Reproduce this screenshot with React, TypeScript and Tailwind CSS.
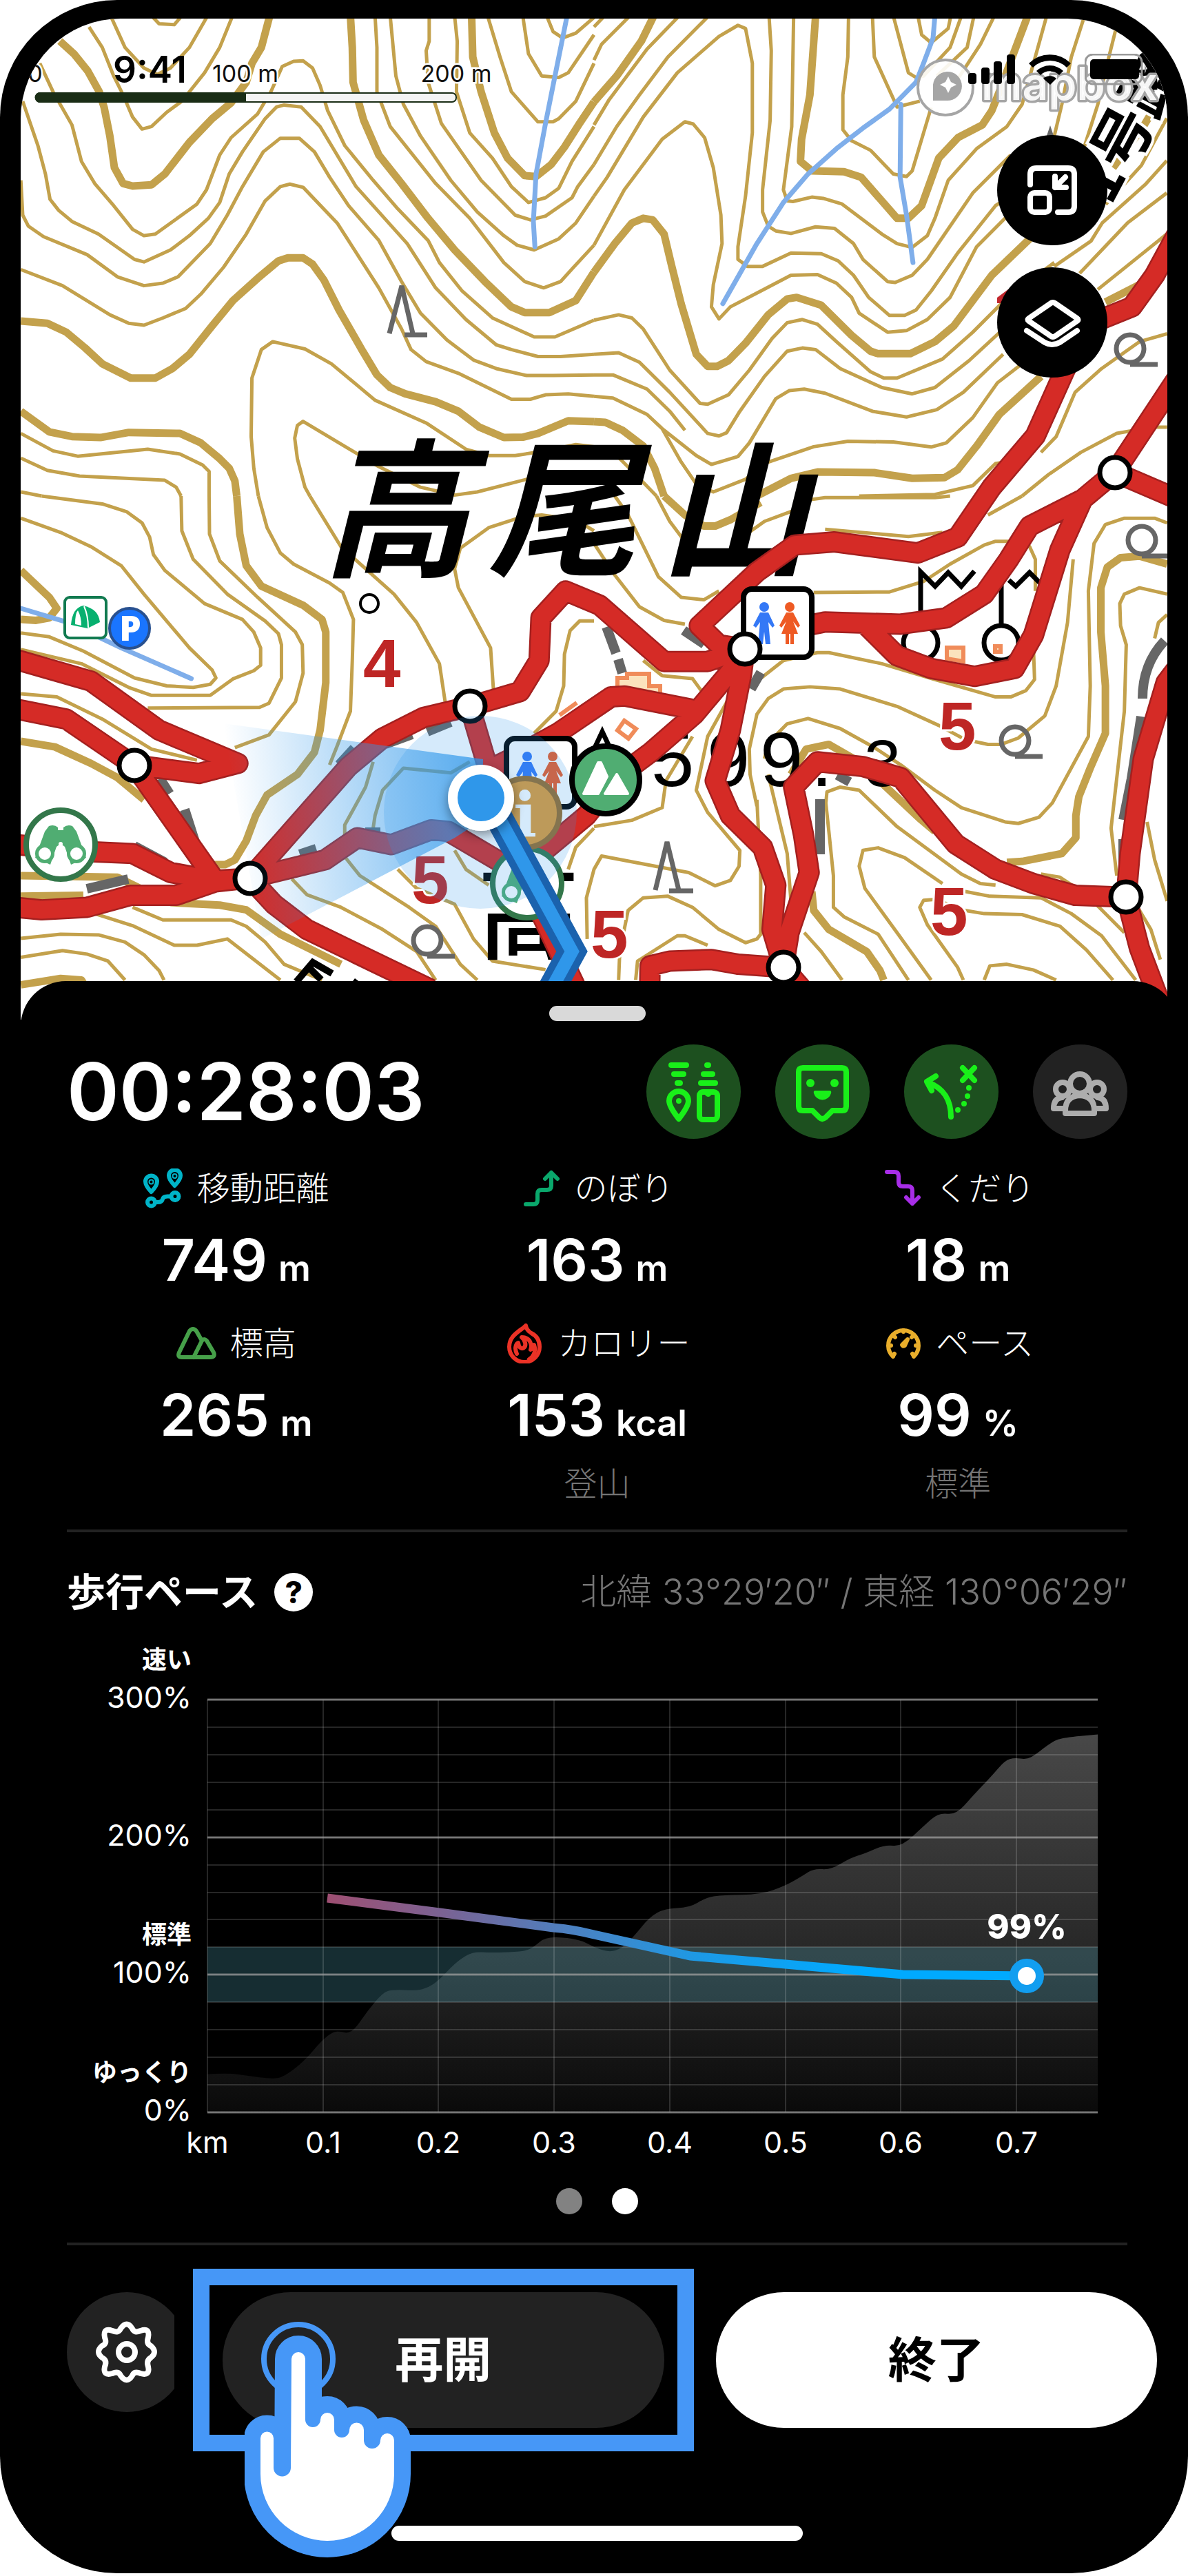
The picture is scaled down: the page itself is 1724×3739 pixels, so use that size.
import type { ReactNode } from "react";

type Point = [number, number];

// Contour lines are kept per map tile, every tile is 1568 x 1568 units.
const TILE = 1568;

const tiles = [
  {
    x: 0,
    y: 0,
    bold: "M158,130 195,170 232,225 262,290 275,340 290,430 302,530 325,580 350,588 400,584 435,550 500,450 560,375 610,325 650,260 665,200 690,150 712,50 M925,50 930,150 932,260 960,380 1000,490 1060,580 1130,690 1200,790 1280,890 1350,970 1385,988 1450,988 1520,950 1568,860 M1245,50 1248,180 1270,290 1305,420 1340,500 1385,555 1415,558 1455,520 1490,465 1530,390 1568,322 M55,1015 125,1022 175,1050 225,1100 270,1150 345,1195 410,1195 455,1165 500,1120 560,1030 615,950 680,880 735,825 760,815 800,815 825,835 855,885 895,980 955,1105 995,1185 1030,1225 1070,1245 1150,1270 1210,1300 1265,1350 1330,1383 1380,1382 1420,1370 1500,1330 1568,1333 M55,1300 130,1365 190,1380 265,1383 340,1367 475,1370 530,1400 580,1450 605,1480 620,1520 625,1568",
    thin: "M400,50 420,75 460,78 480,50 M292,50 330,150 380,215 415,235 450,215 500,150 548,50 M235,85 270,150 300,240 325,300 350,370 375,408 400,400 440,355 480,320 540,230 580,150 614,50 M105,200 140,290 190,395 215,510 250,580 300,650 350,725 380,745 410,740 520,645 545,600 580,490 610,435 680,360 715,290 745,210 775,194 800,192 825,215 845,270 865,350 910,460 985,570 1050,660 1130,760 1160,830 1220,920 1300,1005 1410,1065 1465,1065 1568,1012 M60,320 100,460 120,550 132,630 155,665 190,700 260,740 355,820 380,828 450,790 500,745 550,690 580,640 605,550 640,480 700,375 730,338 750,332 795,338 845,400 900,510 940,590 1000,670 1075,770 1150,910 1230,1010 1310,1090 1350,1105 1420,1127 1480,1127 1568,1120 M55,570 60,680 75,715 115,748 230,805 310,875 380,903 430,895 470,875 555,770 600,680 640,590 695,480 740,437 790,437 830,480 870,560 920,650 1000,760 1060,890 1110,990 1180,1075 1250,1138 1310,1165 1390,1187 1460,1187 1568,1185 M55,852 165,903 290,995 340,1022 380,1028 430,1005 490,975 530,930 590,845 650,740 700,635 740,590 765,582 800,592 890,705 1000,910 1060,1040 1085,1105 1125,1143 1210,1180 1350,1262 1400,1262 1440,1248 1500,1245 1568,1253 M990,50 995,150 995,290 1030,400 1150,580 1240,690 1330,830 1385,890 1435,910 1480,890 1510,850 1568,775 M1030,50 1045,240 1065,330 1110,430 1190,570 1260,670 1330,745 1365,775 1410,790 1475,755 1520,705 1568,620 M1133,50 1133,130 1125,160 1130,260 1165,390 1270,570 1360,680 1400,695 1440,683 1510,625 1525,590 1568,520 M1200,50 1207,130 1205,290 1240,420 1300,500 1350,590 1395,640 1440,625 1475,595 1510,510 1568,400 M1287,50 1320,180 1350,290 1420,385 1460,385 1475,375 1520,320 1568,200 M1380,50 1395,170 1430,240 1475,245 1500,230 1568,110 M1443,50 1460,100 1485,120 1520,105 1568,55 M682,1568 670,1480 663,1380 665,1195 690,1105 720,1080 805,1103 875,1150 990,1265 1125,1337 1230,1420 1290,1440 1360,1440 1440,1425 1520,1405 1568,1412 M818,1568 805,1540 785,1450 778,1385 785,1345 800,1332 860,1375 1000,1475 1110,1540 1200,1565 1260,1555 1400,1512 M55,1370 140,1425 205,1442 390,1420 475,1435 535,1470 552,1490 552,1568 M55,1448 125,1487 210,1505 435,1518 465,1540 478,1568 M55,1555 110,1568",
    river: "M1497,50 1465,240 1440,390 1415,550 1408,700 1412,780",
  },
  {
    x: 1,
    y: 0,
    bold: "M158,50 125,130 60,240 0,322 M585,50 570,300 548,440 545,510 575,540 660,543 705,560 800,690 830,690 865,650 910,500 961,435 1025,395 1050,350 1070,290 1106,174 1145,50 M0,860 55,770 100,705 130,690 155,695 185,740 205,840 230,960 270,1120 300,1158 325,1158 355,1140 400,1085 460,995 510,945 535,940 600,965 680,1060 730,1110 750,1118 835,1118 900,1080 950,1030 1050,870 1150,755 M0,1333 30,1335 75,1360 130,1410 160,1480 185,1568 M430,1568 520,1512 590,1492 740,1494 840,1512 925,1510 960,1485 1010,1410 1070,1310 1180,1190 M1350,955 1440,900 1475,870 M1480,340 1450,400 1370,530",
    thin: "M28,50 0,85 M95,50 20,140 0,190 M225,50 140,155 40,315 0,395 M303,50 195,180 120,300 60,400 40,440 0,520 M0,620 35,560 130,370 220,230 330,115 380,80 400,90 418,200 418,420 400,620 380,780 380,820 405,842 445,842 520,800 600,802 645,825 685,870 725,940 780,997 820,997 850,980 890,920 960,800 1060,650 1100,620 M0,775 80,600 180,440 240,385 262,392 292,435 315,530 335,680 338,770 315,900 310,970 330,1008 360,970 440,920 520,870 590,868 640,895 680,940 700,990 775,1050 825,1045 880,1010 940,940 1010,780 1110,660 M462,50 468,160 465,380 445,600 445,670 460,715 480,730 520,738 585,717 635,722 685,770 710,820 775,890 795,893 840,870 880,820 1000,610 1100,490 M527,50 522,400 500,600 510,635 525,637 575,623 605,627 655,645 760,740 800,770 840,782 880,745 900,690 935,570 1010,470 1090,400 1130,330 1195,50 M672,50 670,180 657,300 657,410 680,445 730,475 790,550 825,558 840,540 890,340 M735,50 740,180 800,338 860,320 M790,50 830,230 850,245 870,240 940,150 970,50 M855,50 865,110 890,135 935,90 942,50 M905,240 985,150 1003,50 M960,250 1020,140 1057,50 M1295,50 1260,180 1235,330 1215,430 M1378,90 1355,200 1330,330 1290,480 M1512,374 1445,523 1351,646 M1512,508 1457,581 1342,704 1312,762 1215,842 M1512,610 1409,704 1282,864 M1512,740 1330,915 M0,1012 65,995 100,1005 130,1040 200,1170 280,1275 300,1278 355,1248 410,1170 470,1070 510,1020 550,1010 590,1025 640,1080 730,1175 765,1195 800,1195 920,1135 1000,1050 1100,930 1215,830 M0,1120 65,1115 120,1145 200,1240 300,1370 330,1378 350,1368 385,1300 450,1190 510,1110 550,1100 585,1105 650,1165 760,1225 840,1245 900,1225 990,1140 1085,1035 M0,1185 50,1185 140,1230 200,1300 240,1360 M0,1253 50,1258 140,1310 180,1355 270,1440 310,1468 380,1443 410,1400 480,1260 515,1235 555,1230 610,1243 735,1300 825,1318 905,1295 975,1240 1080,1120 M180,1355 230,1460 270,1530 315,1555 400,1515 450,1465 580,1412 670,1395 790,1397 890,1413 930,1400 1000,1320 1065,1210 1130,1150 M0,1412 60,1440 110,1500 165,1568 M700,1568 900,1563 1000,1535 1060,1465 1090,1460 M1513,1350 1475,1350 1380,1370 1285,1430 1200,1500 1130,1568 M1513,1055 1440,1080 1340,1165 1270,1240 1220,1380 1180,1430",
    river: "M900,50 895,120 870,200 850,260 780,345 710,405 640,470 565,550 500,640 430,770 340,960 M810,330 808,560 825,680 842,830",
  },
  {
    x: 0,
    y: 1,
    bold: "M625,0 633,120 650,220 690,285 800,345 850,390 860,430 860,590 845,740 830,810 785,880 705,945 675,1010 650,1090 620,1150 595,1165 555,1165 M55,235 130,320 150,355 130,385 95,393 55,390 M55,775 145,793 240,845 310,890 380,960 M55,1200 310,1205 370,1240 M55,1265 220,1262 M450,1285 580,1293 650,1308 740,1385 900,1480 M55,1545 160,1525 215,1530 235,1568",
    thin: "M110,0 270,25 335,50 375,85 395,130 405,185 435,235 540,340 640,390 670,430 688,480 688,535 670,552 615,578 555,630 400,630 340,605 215,530 55,485 M55,70 160,115 240,160 320,220 380,310 500,480 560,550 570,575 555,595 510,605 440,600 355,575 220,490 130,445 55,433 M478,0 480,110 510,200 600,310 700,395 735,435 743,470 743,575 710,655 685,668 390,670 M552,0 553,120 580,205 680,320 780,430 798,470 800,560 780,650 710,755 620,795 M682,0 705,100 740,180 775,215 870,275 905,305 933,390 930,520 925,680 890,790 870,850 M818,0 900,160 1040,310 1100,400 1160,530 1175,650 M55,625 150,635 270,705 400,800 520,835 M1568,110 1520,75 1430,60 1380,65 1290,100 1215,165 1200,230 1210,290 1295,480 1303,620 M1568,395 1530,395 1505,425 1490,500 1488,600 1468,680 1410,750 M1240,840 1190,875 1065,860 1010,930 990,1010 985,1050 M985,840 965,920 910,1040 910,1140 950,1200 1080,1300 1150,1360 1215,1480 1260,1530 M770,1210 810,1260 900,1300 1010,1370 1100,1440 1150,1530 M1200,1120 1230,1180 1290,1230 M1050,1180 1100,1240 1200,1290 1250,1400 1300,1470 1440,1497 M55,1398 160,1385 260,1387 330,1410 380,1450 420,1500 433,1530 M55,1458 165,1437 230,1448 285,1470 330,1530 M250,1320 350,1358 460,1420 520,1420 600,1400 740,1530 M350,1300 430,1340 610,1340 650,1360 700,1410 750,1480 850,1530 M1568,1050 1520,1110 1500,1180",
    river: "M55,355 180,400 320,480 505,577",
  },
  {
    x: 1,
    y: 1,
    bold: "M185,0 240,60 290,95 320,95 360,75 440,20 M1513,215 1440,190 1390,195 1355,225 1338,290 1338,430 1350,600 1350,750 1310,860 1280,950 1272,1010 1272,1080 1235,1130 1130,1155 1090,1158 M520,880 560,800 620,785 700,840 860,1020 900,1060 M575,1250 580,1310 620,1370 720,1440 755,1500 765,1530",
    thin: "M55,0 90,60 170,255 230,320 290,328 330,300 M0,150 55,250 120,350 185,393 240,405 M550,15 610,5 900,5 940,0 M380,140 450,80 540,40 M610,105 830,128 920,115 M1040,60 1130,0 M165,0 200,80 250,160 M580,305 780,303 870,270 940,215 1030,155 1060,143 1110,143 1150,160 1165,200 1165,300 M415,600 500,520 590,495 620,495 760,530 900,580 1060,635 1100,635 1140,615 1163,580 1160,480 M130,520 180,568 260,577 280,610 300,640 M430,980 412,880 410,800 430,690 460,640 500,610 570,603 650,610 800,665 910,725 980,770 1040,785 1075,785 1120,765 1190,695 1220,600 1250,400 1265,200 M450,830 460,780 510,720 565,703 650,735 740,795 810,850 900,930 970,985 1085,1030 1120,1035 1175,1015 1210,970 1305,760 1310,600 1305,300 1320,150 1350,90 1400,70 1480,70 1513,85 M1513,310 1440,290 1400,310 1388,340 1390,410 1405,470 1400,680 1365,1050 1380,1200 M1513,375 1490,400 1480,450 M365,620 300,760 270,930 300,1000 385,1120 383,1170 360,1215 320,1232 250,1190 20,1138 0,1180 -20,1270 -18,1400 M0,1045 100,1025 180,985 190,900 260,760 M440,1385 430,1400 400,1412 330,1370 260,1300 195,1265 130,1270 90,1310 68,1440 65,1530 M430,960 440,1200 440,1390 M460,880 510,1130 520,1280 M110,1530 115,1470 220,1390 240,1390 300,1420 M1060,1230 1020,1225 970,1195 800,1045 700,930 650,920 615,935 612,970 620,1060 632,1200 632,1300 660,1330 750,1385 830,1530 M920,1225 820,1143 750,1112 710,1120 700,1170 715,1240 800,1380 890,1530 M975,1530 960,1490 880,1355 860,1300 870,1278 900,1275 980,1310 1030,1320 1130,1323 1230,1360 1300,1435 1370,1530 M980,1250 1045,1265 1180,1270 1260,1320 1340,1390 1430,1530 M1180,1195 1230,1205 1300,1260 1400,1380 M1460,1030 1480,1150 1513,1280 M1430,1290 1470,1370 1495,1465 M1030,1530 1045,1485 1090,1480 1160,1498 1220,1530 M555,1380 600,1440 655,1530",
    river: "",
  },
];

// Trails use the coordinates of the lower right tile.
const trails =
  "M-1560,505 -1328,585 -1148,740 -940,845 -1043,877 -1213,850 M-1560,665 -1393,705 -1213,852 -1000,1215 M-1560,1098 -1318,1125 -1218,1130 -1118,1190 -1003,1215 -908,1208 M-1560,1296 -1458,1308 -1338,1300 -1223,1262 -1103,1262 -1000,1220 -908,1208 M-908,1208 -648,855 -558,765 -450,700 -328,665 -195,618 -145,520 -140,385 -75,300 15,345 185,523 300,523 398,483 M-908,1208 -710,1150 -625,1080 -535,1102 -430,1055 -385,1060 -250,1155 -180,1170 -20,1010 60,890 150,810 265,690 300,640 398,500 M263,675 81,632 45,635 -94,748 -215,828 -288,871 M-328,665 -275,880 M-908,1208 -845,1290 -758,1370 -430,1560 M-148,1300 -45,1560 M398,483 390,560 360,740 320,900 360,1010 445,1110 480,1230 470,1370 500,1490 565,1580 M500,1490 515,1380 568,1190 553,1070 527,920 590,840 710,855 810,890 955,1100 1060,1180 1160,1225 1270,1262 1405,1268 M500,1490 380,1480 310,1465 200,1470 148,1485 147,1560 M1580,480 1510,590 1450,830 1415,1130 1405,1268 1440,1430 1500,1620 M398,483 330,470 278,410 430,240 530,155 635,145 855,180 960,130 1050,-28 1165,-190 1240,-390 1300,-540 1420,-598 1480,-698 1540,-830 M480,430 610,398 810,405 930,385 1030,310 1095,200 1150,95 1290,10 1375,-75 1560,20 M1375,-75 1560,-410 M1290,10 1230,170 1160,440 1110,545 1005,570 890,545 800,505 720,410";

const junctions: Point[] = [
  [682, 1025],
  [195, 1111],
  [363, 1275],
  [1081, 942],
  [1137, 1404],
  [1634, 1302],
  [1618, 686],
];

const Restroom = ({ x, y }: { x: number; y: number }) => (
  <g transform={`translate(${x} ${y})`}>
    <rect x="4" y="4" width="99" height="99" rx="12" fill="#fff" stroke="#000" strokeWidth="8" />
    <g fill="#3478f6">
      <circle cx="34" cy="30" r="7" />
      <path d="M28 38 h12 l9 19 -3 3 -6 -8 3 32 h-7 l-2 -18 -2 18 h-7 l3 -32 -6 8 -4 -3z" />
    </g>
    <g fill="#ee5a24">
      <circle cx="71" cy="30" r="7" />
      <path d="M66 38 h10 l10 19 -3 3 -7 -9 7 18 h-6 v15 h-5 v-15 h-2 v15 h-5 v-15 h-6 l7 -18 -7 9 -3 -3z" />
    </g>
  </g>
);

const Lookout = ({ x, y }: { x: number; y: number }) => (
  <g transform={`translate(${x} ${y})`}>
    <circle r="50" fill="#fff" stroke="#33774a" strokeWidth="8" />
    <g fill="#50ad72">
      <path d="M-17 -27 q8 -3 13 2 v4 h8 v-4 q6 -5 13 -2 l6 8 14 38 -22 10 -9 -26 q-6 -6 -12 0 l-9 26 -22 -10 14 -38z" />
      <circle cx="-23" cy="13" r="14" />
      <circle cx="23" cy="13" r="14" />
    </g>
    <circle cx="-23" cy="13" r="9" fill="#fff" />
    <circle cx="23" cy="13" r="9" fill="#fff" />
    <circle cy="-1" r="3" fill="#fff" />
  </g>
);

const TrailMap = () => (
  <svg viewBox="30 27 1664 1453" className="block h-auto w-full bg-white" role="img" aria-label="高尾山">
    <defs>
      <linearGradient id="heading" gradientUnits="userSpaceOnUse" x1="340" y1="1190" x2="700" y2="1150">
        <stop offset="0" stopColor="#2f97ea" stopOpacity="0" />
        <stop offset="1" stopColor="#2f97ea" stopOpacity="0.75" />
      </linearGradient>
      <filter id="shadow" x="-30%" y="-30%" width="160%" height="160%">
        <feDropShadow dx="0" dy="6" stdDeviation="8" floodOpacity="0.4" />
      </filter>
    </defs>

    <g transform="scale(0.54974 0.45918)" fill="none" stroke="#c3a14c" strokeLinejoin="round">
      {tiles.map((tile) => (
        <g key={`${tile.x}${tile.y}`} transform={`translate(${tile.x * TILE} ${tile.y * TILE})`}>
          <path d={tile.thin} strokeWidth="5" vectorEffect="non-scaling-stroke" />
          <path d={tile.bold} strokeWidth="11" vectorEffect="non-scaling-stroke" />
          {tile.river && (
            <path d={tile.river} stroke="#7faeea" strokeWidth="7" strokeLinecap="round" vectorEffect="non-scaling-stroke" />
          )}
        </g>
      ))}
    </g>

    {/* vegetation marks */}
    <g fill="none" stroke="#666" strokeWidth="7">
      <path d="M565 484 L583 415 L599 484 M587 486 H620 M951 1292 L968 1222 L985 1292 M971 1293 H1006" />
      <path d="M1518 200 l6 -18 6 18z" fill="#666" stroke="none" />
      {[[1640, 506], [1657, 784], [1473, 1075], [620, 1365]].map(([x, y]) => (
        <g key={x}>
          <circle cx={x} cy={y} r="20" />
          <path d={`M${x} ${y + 23} h40`} />
        </g>
      ))}
    </g>

    <g fill="none" stroke="#666" strokeWidth="14">
      <path d="M880 910 l14 38 M897 957 l6 20 M992 915 l30 20 M1090 1000 l14 -24 M1190 1160 v80 M1215 1125 l18 10 M1690 930 q-32 34 -32 84 M1656 1040 l-14 90 -12 60 M1630 1218 v40 M232 1130 l14 22 M268 1175 l16 50 M195 1228 l45 24 M126 1290 l60 -14" />
      <path d="M492 1110 l22 -24 M560 1080 l38 -14 M620 1062 l34 -14 M435 1240 l24 -8 M530 1208 h22" />
    </g>

    <g fill="#fbe3bd" stroke="#f08c5a" strokeWidth="6">
      <path d="M896 1000 v-16 h14 v-6 h32 v18 h16 v10" />
      <path d="M1374 956 v-16 h24 v20z M1444 938 h8 v8 h-8z" />
      <path d="M906 1046 l17 12 -11 14 -16 -12z M812 1038 l25 -18" fill="none" />
    </g>

    <g fontFamily="'Noto Sans CJK JP', sans-serif" fontStyle="italic" fontWeight="700" fontSize="216">
      <text x="466" y="820">高</text>
      <text x="708" y="820">尾</text>
      <text x="958" y="820">山</text>
    </g>

    <g fontFamily="'Noto Sans CJK JP', sans-serif">
      <text x="692" y="1380" fontSize="150" fontWeight="500">高</text>
      <text
        transform="translate(1612 300) rotate(-62)"
        fontSize="88"
        fontWeight="700"
        stroke="#fff"
        strokeWidth="8"
        paintOrder="stroke"
      >
        1号路
      </text>
    </g>
    <path d="M430 1425 l24 -28 28 16 M446 1402 l20 20 M512 1424 l8 6" fill="none" stroke="#000" strokeWidth="10" />

    <g fill="none" stroke="#000" strokeWidth="7">
      <path d="M1336 890 V830 L1357 851 L1376 831 L1395 851 L1414 829 M1453 905 V835 M1464 842 L1474 851 L1494 831 L1512 849" />
      <circle cx="1336" cy="933" r="25" />
      <circle cx="1453" cy="933" r="25" />
    </g>

    <g fontFamily="'Liberation Sans', Arial, sans-serif" fontSize="112">
      <text y="1141">
        <tspan x="945">5</tspan>
        <tspan x="1026">9</tspan>
        <tspan x="1103">9</tspan>
        <tspan x="1177">.</tspan>
      </text>
      <text x="1254" y="1141" fontSize="96">3</text>
    </g>
    <path d="M874 1062 L858 1096 H890z" fill="none" stroke="#000" strokeWidth="7" />

    <g transform="scale(0.54974 0.45918)" fill="none" strokeLinejoin="round">
      <g transform={`translate(${TILE} ${TILE})`}>
        <path d={trails} stroke="#a4201f" strokeWidth="31" vectorEffect="non-scaling-stroke" />
        <path d={trails} stroke="#d52b26" strokeWidth="26" vectorEffect="non-scaling-stroke" />
      </g>
    </g>
    <path d="M1447 432 l16 -12 v20 h-16z" fill="#c2272d" />

    <g
      fill="#be2625"
      fontFamily="'Liberation Sans', Arial, sans-serif"
      fontWeight="700"
      fontSize="98"
      stroke="#fff"
      strokeWidth="6"
      paintOrder="stroke"
    >
      <text x="527" y="997">4</text>
      <text x="597" y="1311">5</text>
      <text x="1362" y="1088">5</text>
      <text x="1350" y="1357">5</text>
      <text x="857" y="1390">5</text>
    </g>

    <Restroom x={1075} y={851} />
    {junctions.map(([x, y]) => (
      <circle key={x} cx={x} cy={y} r="22" fill="#fff" stroke="#000" strokeWidth="7" />
    ))}
    <circle cx="536" cy="876" r="13" fill="#fff" stroke="#000" strokeWidth="4" />

    <rect x="94" y="867" width="60" height="59" rx="7" fill="#fff" stroke="#117a50" strokeWidth="4" />
    <path d="M103 907 Q105 882 121 879 Q143 884 145 903 L127 912z" fill="#07b06f" />
    <path d="M109 906 q0 -16 4 -20 q5 9 5 22z" fill="#fff" />
    <path d="M122 880 q6 14 6 31" fill="none" stroke="#fff" strokeWidth="2" />
    <circle cx="188" cy="912" r="29" fill="#1a75ff" stroke="#28508f" strokeWidth="4" />
    <text x="189" y="930" textAnchor="middle" fontFamily="'Open Sans', sans-serif" fontWeight="800" fontSize="50" fill="#fff">
      P
    </text>

    <Lookout x={88} y={1226} />
    <Restroom x={731} y={1068} />
    <Lookout x={765} y={1282} />
    <circle cx="762" cy="1180" r="50" fill="#e29b36" stroke="#9a6c28" strokeWidth="8" />
    <text x="762" y="1214" textAnchor="middle" fontFamily="'DejaVu Serif', serif" fontWeight="700" fontSize="90" fill="#fff">
      i
    </text>

    {/* current position */}
    <circle cx="697" cy="1179" r="140" fill="#2f97ea" fillOpacity="0.2" />
    <path d="M324 1050 L701 1102 L700 1190 L660 1216 L379 1363z" fill="url(#heading)" />
    <circle cx="879" cy="1132" r="49" fill="#50ad72" stroke="#000" strokeWidth="8" />
    <g fill="#fff" stroke="#fff" strokeWidth="4" strokeLinejoin="round">
      <path d="M847 1152 L868 1107 L872 1107 L881 1127 L868 1152z" />
      <path d="M878 1152 L895 1124 L911 1152z" />
    </g>
    <g fill="none">
      <path d="M712 1165 L830 1381 L795 1445" stroke="#1b62ad" strokeWidth="40" />
      <path d="M712 1165 L830 1381 L795 1445" stroke="#2f97ea" strokeWidth="19" />
    </g>
    <circle cx="698" cy="1158" r="48" fill="#fff" filter="url(#shadow)" />
    <circle cx="698" cy="1158" r="34" fill="#2f97ea" />

    {/* attribution */}
    <g stroke="#a5a5a5" fill="#fff">
      <circle cx="1372" cy="127" r="40" fillOpacity="0.9" strokeWidth="4" />
      <path d="M1354 146 v-19 a21 21 0 1 1 20 19z" fill="#a5a5a5" stroke="none" />
      <path d="M1376 111 l4 8 8 4 -8 4 -4 8 -4 -8 -8 -4 8 -4z" stroke="none" />
      <text
        x="1424"
        y="145"
        fontFamily="Inter, sans-serif"
        fontSize="66"
        fontWeight="600"
        fillOpacity="0.9"
        strokeWidth="7"
        strokeLinejoin="round"
        paintOrder="stroke"
      >
        mapbox
      </text>
    </g>

    {/* scale */}
    <rect x="52" y="135" width="610" height="13" rx="6" fill="#f4f4f4" stroke="#1a2d16" strokeWidth="2" />
    <path d="M357 134 H58 a7 7 0 0 0 0 15 H357z" fill="#1a2d16" />
    <g
      fontFamily="Inter, sans-serif"
      fontSize="34"
      fill="#111"
      textAnchor="middle"
      stroke="#fff"
      strokeWidth="5"
      paintOrder="stroke"
    >
      <text x="51" y="119">0</text>
      <text x="356" y="119">100 m</text>
      <text x="662" y="119">200 m</text>
    </g>
  </svg>
);

const StatusBar = () => (
  <div className="absolute inset-x-0 top-11 flex items-center justify-between pr-[28px] pl-[134px] text-black">
    <span className="text-[53px] leading-[60px] font-semibold">9:41</span>
    <div className="flex items-center gap-5">
      <svg viewBox="0 0 68 44" className="h-11 w-[68px]" fill="currentColor">
        <rect x="0" y="27" width="12" height="16" rx="4" />
        <rect x="19" y="19" width="12" height="24" rx="4" />
        <rect x="37" y="10" width="12" height="33" rx="4" />
        <rect x="56" y="0" width="12" height="43" rx="4" />
      </svg>
      <svg viewBox="0 0 61 44" className="h-11 w-[61px]" fill="currentColor">
        <path d="M0 13 a43 43 0 0 1 61 0 l-6 6 a35 35 0 0 0 -49 0z" />
        <path d="M11 24 a28 28 0 0 1 39 0 l-6 6 a19 19 0 0 0 -27 0z" />
        <path d="M21 35 a14 14 0 0 1 19 0 l-9 9z" />
      </svg>
      <svg viewBox="0 0 92 46" className="h-[46px] w-[92px]">
        <rect x="1" y="1" width="82" height="43" rx="11" fill="none" stroke="#999" strokeWidth="3" />
        <rect x="8" y="8" width="71" height="29" rx="5" />
        <path d="M87 16 q5 6 0 13z" fill="#999" />
      </svg>
    </div>
  </div>
);

const MapButton = ({ label, children }: { label: string; children: ReactNode }) => (
  <button type="button" aria-label={label} className="size-40 rounded-full bg-black text-white">
    <svg
      viewBox="0 0 160 160"
      fill="none"
      stroke="currentColor"
      strokeWidth="8"
      strokeLinecap="round"
      strokeLinejoin="round"
    >
      {children}
    </svg>
  </button>
);

const TrackingButton = ({ label, active, children }: { label: string; active?: boolean; children: ReactNode }) => (
  <button
    type="button"
    aria-label={label}
    aria-pressed={!!active}
    className={`size-[137px] rounded-full ${active ? "bg-[#1d501f] text-[#19f019]" : "bg-[#222] text-[#adadad]"}`}
  >
    <svg
      viewBox="0 0 137 137"
      fill="none"
      stroke="currentColor"
      strokeWidth="8"
      strokeLinecap="round"
      strokeLinejoin="round"
    >
      {children}
    </svg>
  </button>
);

const metrics = [
  {
    label: "移動距離",
    value: "749",
    unit: "m",
    note: "",
    color: "text-[#00b4c8]",
    icon: (
      <>
        <path d="M11.500 34 Q3 25 3 19 a8.500 8.500 0 0 1 17 0 Q20 25 11.500 34z" />
        <path d="M45.500 25 Q37 16 37 10.500 a8.500 8.500 0 0 1 17 0 Q54 16 45.500 25z" />
        <circle cx="11.500" cy="19.500" r="1" />
        <circle cx="45.500" cy="11" r="1" />
        <circle cx="11.500" cy="49" r="5.500" />
        <circle cx="46" cy="40.500" r="5.500" />
        <path d="M17 49 h4 q6 0 7 -4.500 q1 -4 7 -4 h5" />
      </>
    ),
  },
  {
    label: "のぼり",
    value: "163",
    unit: "m",
    note: "",
    color: "text-[#0aa86c]",
    icon: <path d="M8 52 h11 q6 0 6 -6 v-9 q0 -6 6 -6 h8 q6 0 6 -6 V6 M36 15 l9 -9 9 9" />,
  },
  {
    label: "くだり",
    value: "18",
    unit: "m",
    note: "",
    color: "text-[#a82de8]",
    icon: <path d="M8 5 h11 q6 0 6 6 v9 q0 6 6 6 h8 q6 0 6 6 v19 M36 42 l9 9 9 -9" />,
  },
  {
    label: "標高",
    value: "265",
    unit: "m",
    note: "",
    color: "text-[#46a049]",
    icon: (
      <path d="M8 49 H49 q8 0 5 -7 L44 25 q-4 -4 -7 0 L25 49 M37 25 L29 11 q-5 -6 -10 0 L4 42 q-3 7 4 7" />
    ),
  },
  {
    label: "カロリー",
    value: "153",
    unit: "kcal",
    note: "登山",
    color: "text-[#eb3226]",
    icon: (
      <>
        <path d="M32 3 C24 11 8 17 8 34 a22 22 0 0 0 44 0 C52 23 46 17 40 14 Q33 10 32 3z" />
        <path d="M19 44 C15 36 18 29 21 28 C22 35 25 37 28 36 C34 33 31 24 26 20 C40 20 41 33 39 38 C42 37 44 34 44 31 C48 42 41 50 37 52" />
      </>
    ),
  },
  {
    label: "ペース",
    value: "99",
    unit: "%",
    note: "標準",
    color: "text-[#e9ae2b]",
    icon: (
      <>
        <path d="M16 48 A22 22 0 1 1 46 48" />
        <path d="M31 10 v2 M17 18 l2 2 M45 18 l-2 2 M10 32 h3 M52 32 h-3 M16 47 l2 -3 M46 47 l-2 -3" />
        <path d="M37 23 L29 31 Q30 34 33 32z" fill="currentColor" />
      </>
    ),
  },
];

const yTicks = [
  { value: "300%", caption: "速い", y: 2466 },
  { value: "200%", caption: "", y: 2666 },
  { value: "100%", caption: "標準", y: 2865 },
  { value: "0%", caption: "ゆっくり", y: 3065 },
];

const xTicks = ["km", "0.1", "0.2", "0.3", "0.4", "0.5", "0.6", "0.7"];

const elevation: Point[] = [
  [548, 1198], [600, 1195], [650, 1201], [720, 1208], [750, 1203], [800, 1172], [850, 1125], [880, 1106],
  [900, 1106], [918, 1110], [938, 1100], [970, 1062], [1010, 1023], [1035, 1016], [1100, 1018], [1130, 1012],
  [1160, 995], [1200, 960], [1235, 940], [1260, 935], [1300, 937], [1385, 934], [1408, 925], [1440, 903],
  [1500, 905], [1540, 912], [1568, 925], [1608, 936], [1640, 928], [1672, 903], [1715, 860], [1755, 842],
  [1820, 840], [1865, 818], [1908, 813], [2008, 812], [2073, 793], [2118, 772], [2148, 756], [2193, 759],
  [2245, 733], [2283, 724], [2335, 705], [2380, 709], [2438, 665], [2478, 636], [2523, 641], [2568, 600],
  [2618, 557], [2653, 524], [2678, 518], [2710, 522], [2733, 512], [2778, 483], [2808, 475], [2898, 468],
];

// Runs a quadratic curve through the midpoints of the samples.
const smooth = (points: Point[]) =>
  points.slice(1, -1).reduce(
    (path, [x, y], i) => {
      const [nextX, nextY] = points[i + 2];
      return `${path} Q${x} ${y} ${(x + nextX) / 2} ${(y + nextY) / 2}`;
    },
    `M${points[0][0]} ${points[0][1]}`,
  );

const PaceChart = () => (
  <svg viewBox="97 2370 1539 770" className="mt-5 block h-auto w-full" fontFamily="Inter, 'Noto Sans CJK JP', sans-serif">
    <defs>
      <linearGradient id="elevation" x1="0" y1="0" x2="0" y2="1">
        <stop offset="0" stopColor="#484848" />
        <stop offset="0.6" stopColor="#262626" />
        <stop offset="1" stopColor="#0a0a0a" />
      </linearGradient>
      <linearGradient id="pace" gradientUnits="userSpaceOnUse" x1="475" y1="0" x2="1250" y2="0">
        <stop offset="0" stopColor="#9e4f72" />
        <stop offset="0.22" stopColor="#7a6394" />
        <stop offset="0.45" stopColor="#4d80c0" />
        <stop offset="0.7" stopColor="#1c9ae6" />
        <stop offset="1" stopColor="#00aaff" />
      </linearGradient>
    </defs>

    <path
      d={`${smooth(elevation)} L2898 468 V1279 H548z`}
      transform="translate(0 2200) scale(0.54974 0.67602)"
      fill="url(#elevation)"
    />
    <rect x="301" y="2825" width="1292" height="80" fill="#50a0b4" fillOpacity="0.28" />

    <g stroke="#fff" strokeOpacity="0.15" strokeWidth="2">
      {Array.from({ length: 16 }, (_, i) => (
        <path key={i} d={`M301 ${2466 + i * 40 - Math.round(i / 15)} H1593`} />
      ))}
      {xTicks.map((tick, i) => (
        <path key={tick} d={`M${Math.round(301 + i * 167.7)} 2466 V3065`} />
      ))}
    </g>
    <g stroke="#999" strokeOpacity="0.7" strokeWidth="3">
      {yTicks.map((tick) => (
        <path key={tick.value} d={`M301 ${tick.y} H1593`} />
      ))}
    </g>

    <path
      d="M475 2754 L638 2775 L803 2797 Q830 2799 862 2807 L1002 2838 L1140 2850 L1310 2865 L1490 2867"
      fill="none"
      stroke="url(#pace)"
      strokeWidth="13"
    />
    <circle cx="1490" cy="2867" r="19" fill="#fff" stroke="#129ef0" strokeWidth="12" />
    <text x="1490" y="2813" textAnchor="middle" fill="#fff" fontSize="49" fontWeight="800">
      99%
    </text>

    <g fill="#fff" fontSize="43" textAnchor="end">
      {yTicks.map((tick) => (
        <g key={tick.value}>
          <text x="278" y={tick.y + 12}>{tick.value}</text>
          <text x="278" y={tick.y - 45} fontSize="36" fontWeight="700">{tick.caption}</text>
        </g>
      ))}
    </g>
    <g fill="#fff" fontSize="43" textAnchor="middle">
      {xTicks.map((tick, i) => (
        <text key={tick} x={Math.round(301 + i * 167.7)} y="3124">{tick}</text>
      ))}
    </g>
  </svg>
);

const TapHand = () => (
  <svg viewBox="354 3366 242 346" className="pointer-events-none absolute top-10 left-8 w-[242px]">
    <circle cx="432" cy="3423" r="50" fill="none" stroke="#4697f7" strokeWidth="8" />
    <path
      d="M422 3423 a10 10 0 0 1 20 0 V3511 a11 11 0 0 0 22 0 a10 10 0 0 1 20 0 V3526 a11 11 0 0 0 22 0 a10.500 10.500 0 0 1 21 0 V3541 a12 12 0 0 0 24 0 a10 10 0 0 1 20 0 V3590 a97 97 0 0 1 -194 0 V3538 a9.500 9.500 0 0 1 19 0 V3581 a12.500 12.500 0 0 0 25 0z"
      fill="#fff"
      stroke="#4697f7"
      strokeWidth="48"
      strokeLinejoin="round"
      paintOrder="stroke"
    />
  </svg>
);

const App = () => {
  return (
    <div className="bg-white pb-[5px] font-[Inter,'Noto_Sans_CJK_JP',sans-serif]">
      <main className="overflow-hidden rounded-[170px] bg-black pt-[27px] text-white">
        <section className="relative mx-[30px] overflow-hidden rounded-t-[145px]">
          <TrailMap />
          <StatusBar />
          <div className="absolute top-[169px] right-[87px] flex flex-col gap-8">
            <MapButton label="地図を縮小">
              <path d="M48 72 V57 q0 -9 9 -9 h46 q9 0 9 9 v46 q0 9 -9 9 H88" />
              <rect x="48" y="84" width="28" height="28" rx="6" />
              <path d="M84 60 V76 H100 M84 76 L99 61" />
            </MapButton>
            <MapButton label="レイヤー">
              <path d="M78 52 q3 -2 6 0 L116 74 q3 2 0 4 L84 100 q-3 2 -6 0 L46 78 q-3 -2 0 -4z" />
              <path d="M43 92 L69 109 q11 6 22 0 L116 92" />
            </MapButton>
          </div>
        </section>

        <section className="relative mr-[14px] -mt-14 ml-[30px] rounded-t-[66px] bg-black pt-9 pr-[74px] pl-[67px]">
          <div className="mx-auto h-[22px] w-[140px] rounded-full bg-[#d9d9d9]" />

          <div className="mt-[34px] flex items-center justify-between">
            <p className="text-[115px] leading-[137px] font-semibold">00:28:03</p>
            <div className="flex gap-[50px]">
              <TrackingButton label="位置情報の共有" active>
                <path d="M36 30 H58 M40 43 H54 M45 56 H49 M88 30 H90 M83 43 H96 M79 56 H100" />
                <path d="M47 108 Q33 90 33 82 a14 14 0 0 1 28 0 Q61 90 47 108z" />
                <circle cx="47" cy="82" r="4" fill="currentColor" stroke="none" />
                <rect x="77" y="69" width="26" height="40" rx="5" />
                <path d="M84 66 h11 v6 q-5 8 -11 0z" fill="currentColor" stroke="none" />
              </TrackingButton>
              <TrackingButton label="音声メッセージ" active>
                <path d="M40 34 H97 q6 0 6 6 V90 q0 6 -6 6 H83 L73 106 q-5 4 -9 0 L54 96 H40 q-6 0 -6 -6 V40 q0 -6 6 -6z" />
                <g fill="currentColor" stroke="none">
                  <circle cx="51" cy="56" r="6" />
                  <circle cx="86" cy="56" r="6" />
                  <path d="M58 67 H79 q3 0 2 4 a13 13 0 0 1 -25 0 q-1 -4 2 -4z" />
                </g>
              </TrackingButton>
              <TrackingButton label="ルート外れ警告" active>
                <path d="M46 46 L33 54 L40 67 M35 55 C58 64 68 80 68 105 M85 34 L102 52 M102 34 L85 52" />
                <g fill="currentColor" stroke="none">
                  <circle cx="94" cy="63" r="4" />
                  <circle cx="92" cy="75" r="4" />
                  <circle cx="87" cy="86" r="4" />
                  <circle cx="78" cy="95" r="4" />
                </g>
              </TrackingButton>
              <TrackingButton label="仲間">
                <circle cx="68" cy="57" r="14" />
                <circle cx="43" cy="65" r="10" />
                <circle cx="93" cy="65" r="10" />
                <path d="M47 96 Q47 75 68 74 Q89 75 89 96 v4 H47z" />
                <path d="M42 77 Q30 78 30 93 H46 M94 77 Q106 78 106 93 H90" />
              </TrackingButton>
            </div>
          </div>

          <dl className="-mx-4 mt-10 grid grid-cols-3 gap-y-[41px] text-center">
            {metrics.map(({ label, value, unit, note, color, icon }) => (
              <div key={label}>
                <dt className="flex h-16 items-center justify-center gap-5 text-[48px] leading-[64px] font-light">
                  <svg
                    viewBox="0 0 58 58"
                    className={`size-[58px] ${color}`}
                    fill="none"
                    stroke="currentColor"
                    strokeWidth="6"
                    strokeLinecap="round"
                    strokeLinejoin="round"
                  >
                    {icon}
                  </svg>
                  {label}
                </dt>
                <dd className="mt-6 flex h-24 items-baseline justify-center gap-4 text-[84px] leading-[96px] font-semibold">
                  {value}
                  <span className="text-[52px] leading-none">{unit}</span>
                </dd>
                {note && <dd className="mt-5 text-[48px] leading-[64px] font-light text-[#757575]">{note}</dd>}
              </div>
            ))}
          </dl>

          <hr className="mt-[34px] border-t-4 border-[#222]" />

          <div className="mt-[47px] flex h-20 items-center justify-between">
            <h2 className="flex items-center gap-6 text-[56px] leading-[80px] font-bold">
              歩行ペース
              <button
                type="button"
                aria-label="歩行ペースとは"
                className="size-14 rounded-full bg-white text-[44px] leading-[56px] font-extrabold text-black"
              >
                ?
              </button>
            </h2>
            <p className="text-[52px] leading-[80px] font-light text-[#757575]">北緯 33°29′20″ / 東経 130°06′29″</p>
          </div>

          <PaceChart />

          <div className="mt-[35px] flex justify-center gap-[43px]">
            <button type="button" aria-label="1ページ目" className="size-[38px] rounded-full bg-[#828282]" />
            <button type="button" aria-label="2ページ目" className="size-[38px] rounded-full bg-white" />
          </div>

          <hr className="mt-[41px] border-t-4 border-[#222]" />

          <div className="-mr-[43px] mt-[68px] flex items-start">
            <div className="w-[156px] shrink-0 overflow-hidden">
              <button type="button" aria-label="設定" className="size-[174px] rounded-full bg-[#222]">
                <svg
                  viewBox="0 0 174 174"
                  fill="none"
                  stroke="currentColor"
                  strokeWidth="8"
                  strokeLinejoin="round"
                >
                  <path d="M78 53 Q87 40 95 53 Q98 60 107 56 Q121 51 118 66 Q115 75 122 78 Q132 87 122 95 Q115 99 118 108 Q121 122 107 118 Q98 114 95 121 Q87 134 78 121 Q75 114 66 118 Q52 122 55 108 Q59 99 51 95 Q41 87 51 78 Q59 75 55 66 Q52 51 66 56 Q75 60 78 53z" />
                  <circle cx="87" cy="87" r="12" />
                </svg>
              </button>
            </div>
            <div className="relative ml-[70px] flex-1">
              <button type="button" className="h-[197px] w-full rounded-full bg-[#222] text-[70px] font-bold">
                再開
              </button>
              <div className="pointer-events-none absolute -inset-x-[43px] -inset-y-[34px] border-24 border-[#4697f7]" />
              <TapHand />
            </div>
            <button
              type="button"
              className="ml-[75px] h-[197px] flex-1 rounded-full bg-white text-[70px] font-bold text-black"
            >
              終了
            </button>
          </div>

          <div className="mx-auto mt-[142px] mb-[47px] h-[22px] w-[597px] rounded-full bg-white" />
        </section>
      </main>
    </div>
  );
};

export default App;
